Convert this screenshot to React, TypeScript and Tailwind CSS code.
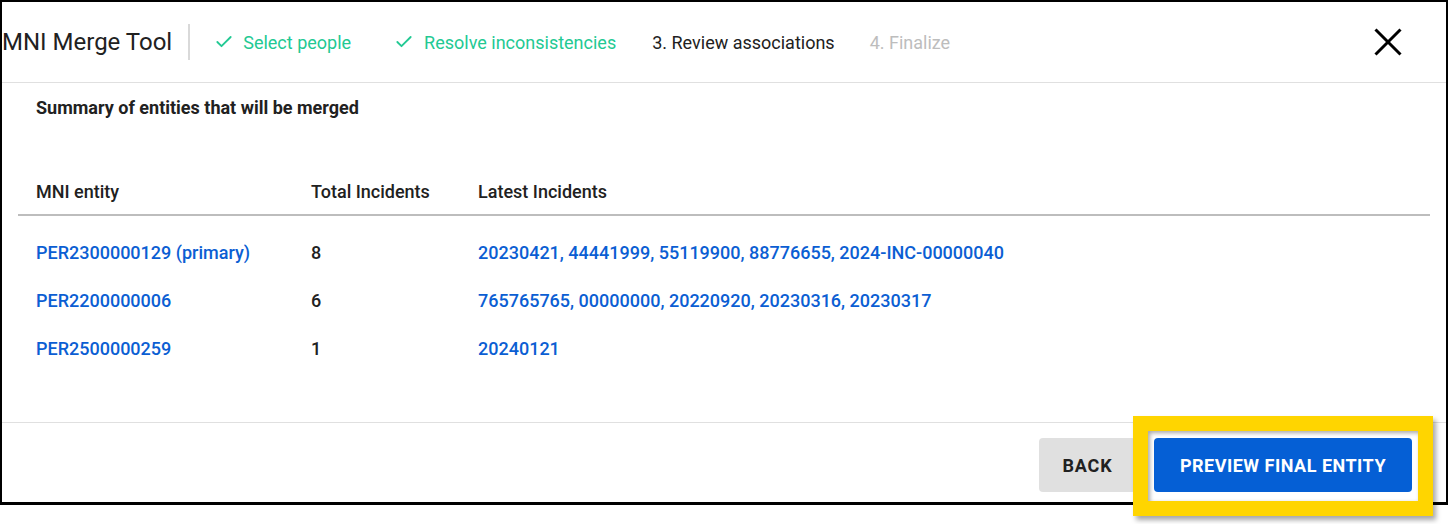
import { Check } from "lucide-react";

const rows = [
  {
    id: "PER2300000129 (primary)",
    total: 8,
    incidents: "20230421, 44441999, 55119900, 88776655, 2024-INC-00000040",
  },
  {
    id: "PER2200000006",
    total: 6,
    incidents: "765765765, 00000000, 20220920, 20230316, 20230317",
  },
  { id: "PER2500000259", total: 1, incidents: "20240121" },
];

export default function App() {
  return (
    <div className="w-[1448px] h-[524px] bg-white font-['Roboto',sans-serif]">
      <div className="w-[1448px] h-[505px] border-2 border-b-[3px] border-black flex flex-col bg-white">
        {/* Header */}
        <div className="h-[81px] flex items-center border-b border-[#e0e0e0] shrink-0">
          <span className="text-[24px] leading-none text-[#212121]">MNI Merge Tool</span>
          <div className="w-[2px] h-[36px] bg-[#d9d9d9] ml-[16px]" />

          <div className="flex items-center ml-[24px] text-[18px] text-[#22c993]">
            <Check size={20} strokeWidth={2.2} />
            <span className="ml-[9px]">Select people</span>
          </div>
          <div className="flex items-center ml-[43px] text-[18px] text-[#22c993]">
            <Check size={20} strokeWidth={2.2} />
            <span className="ml-[10px]">Resolve inconsistencies</span>
          </div>
          <span className="ml-[36px] text-[18px] text-[#212121]">3. Review associations</span>
          <span className="ml-[35px] text-[18px] text-[#bdbdbd]">4. Finalize</span>

          <button className="ml-auto mr-[44px]">
            <svg width="28" height="28" viewBox="0 0 28 28">
              <line x1="1.5" y1="1.5" x2="26.5" y2="26.5" stroke="#000" strokeWidth="3" />
              <line x1="26.5" y1="1.5" x2="1.5" y2="26.5" stroke="#000" strokeWidth="3" />
            </svg>
          </button>
        </div>

        {/* Body */}
        <div className="flex-1 px-[16px]">
          <p className="pl-[18px] pt-[13px] text-[18px] leading-6 font-bold text-[#212121]">
            Summary of entities that will be merged
          </p>

          <div className="mt-[60px] grid grid-cols-[275px_167px_1fr] pl-[18px] pb-[10px] border-b-2 border-[#bdbdbd] text-[18px] leading-6 font-medium text-[#212121]">
            <span>MNI entity</span>
            <span>Total Incidents</span>
            <span>Latest Incidents</span>
          </div>

          <div className="pt-[13px]">
            {rows.map((r) => (
              <div
                key={r.id}
                className="h-12 grid grid-cols-[275px_167px_1fr] items-center pl-[18px] text-[18px] leading-6 font-medium"
              >
                <span className="text-[#0b5ed3]">{r.id}</span>
                <span className="text-[#212121]">{r.total}</span>
                <span className="text-[#0b5ed3]">{r.incidents}</span>
              </div>
            ))}
          </div>
        </div>

        {/* Footer */}
        <div className="border-t border-[#e0e0e0] flex justify-end items-start pt-[15px] pb-[10px] pr-[34px] gap-[18px] shrink-0">
          <button className="h-[54px] w-[97px] rounded bg-[#e0e0e0] text-[18px] font-bold tracking-[0.8px] text-[#212121]">
            BACK
          </button>
          <div className="relative">
            <button className="h-[54px] w-[258px] rounded bg-[#055fd5] text-[18px] font-bold tracking-[0.5px] text-white">
              PREVIEW FINAL ENTITY
            </button>
            <div className="absolute -left-[21px] -right-[21px] -top-[22px] -bottom-[24px] border-[15px] border-[#ffd500] shadow-[3px_4px_5px_rgba(0,0,0,0.35),inset_2px_2px_4px_rgba(0,0,0,0.35)] pointer-events-none" />
          </div>
        </div>
      </div>
    </div>
  );
}
